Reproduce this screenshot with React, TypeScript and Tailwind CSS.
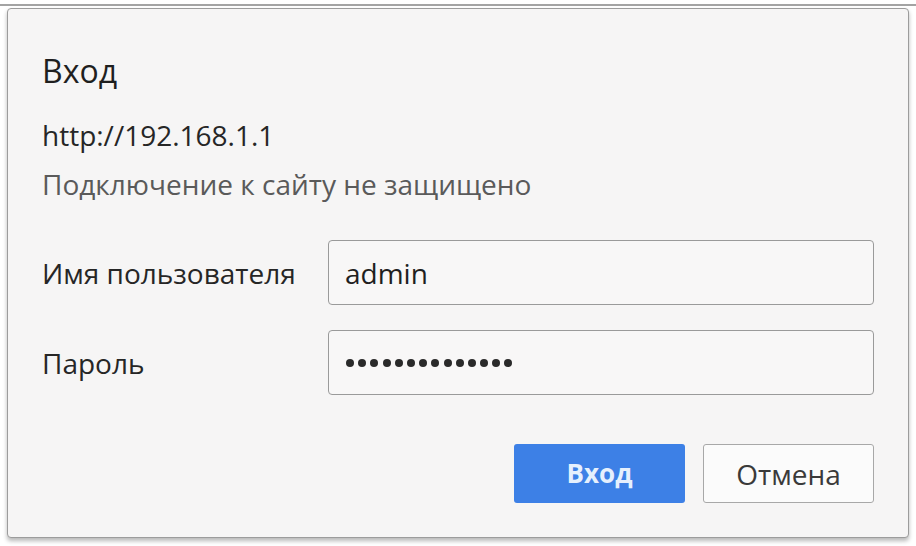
export default function App() {
  const dots = Array.from({ length: 14 })

  return (
    <div className="min-h-[546px] bg-white pt-[4px]" style={{ fontFamily: '"Open Sans", "Noto Sans", sans-serif' }}>
      <div className="h-[2px] bg-[#a3a3a3]" />
      <div className="mx-[7px] mt-[2px] h-[530px] rounded-[4px] border border-[#9c9c9c] bg-[#f6f5f5] px-[34px] pt-[42px] shadow-[0_3px_4px_rgba(0,0,0,0.28)]">
        <div className="h-[40px] text-[32px] leading-[40px] text-[#1f1f1f]">Вход</div>
        <div className="mt-[20px] h-[49px] text-[28px] leading-[49px] text-[#262626]">http://192.168.1.1</div>
        <div className="h-[49px] text-[28px] leading-[49px] text-[#5a5a5a]">Подключение к сайту не защищено</div>

        <div className="mt-[31px] grid grid-cols-[286px_1fr] gap-y-[25px]">
          <div className="flex h-[65px] items-center text-[28px] text-[#262626]">Имя пользователя</div>
          <div className="flex h-[65px] items-center rounded-[4px] border border-[#9a9a9a] bg-[#f8f7f7] px-[16px] text-[28px] text-[#1f1f1f]">
            admin
          </div>
          <div className="flex h-[65px] items-center text-[28px] text-[#262626]">Пароль</div>
          <div className="flex h-[65px] items-center gap-[4.2px] rounded-[4px] border border-[#9a9a9a] bg-[#f8f7f7] px-[17px]">
            {dots.map((_, i) => (
              <span key={i} className="h-[8px] w-[8px] rounded-full bg-[#2a2a2a]" />
            ))}
          </div>
        </div>

        <div className="mt-[49px] flex justify-end gap-[18px]">
          <button className="h-[59px] w-[171px] rounded-[3px] bg-[#3d80e6] text-[26px] font-bold text-[#e6f0fd]">Вход</button>
          <button className="h-[59px] w-[171px] rounded-[3px] border border-[#a8a8a8] bg-[#fbfbfb] text-[28px] text-[#3a3a3a]">Отмена</button>
        </div>
      </div>
    </div>
  )
}
